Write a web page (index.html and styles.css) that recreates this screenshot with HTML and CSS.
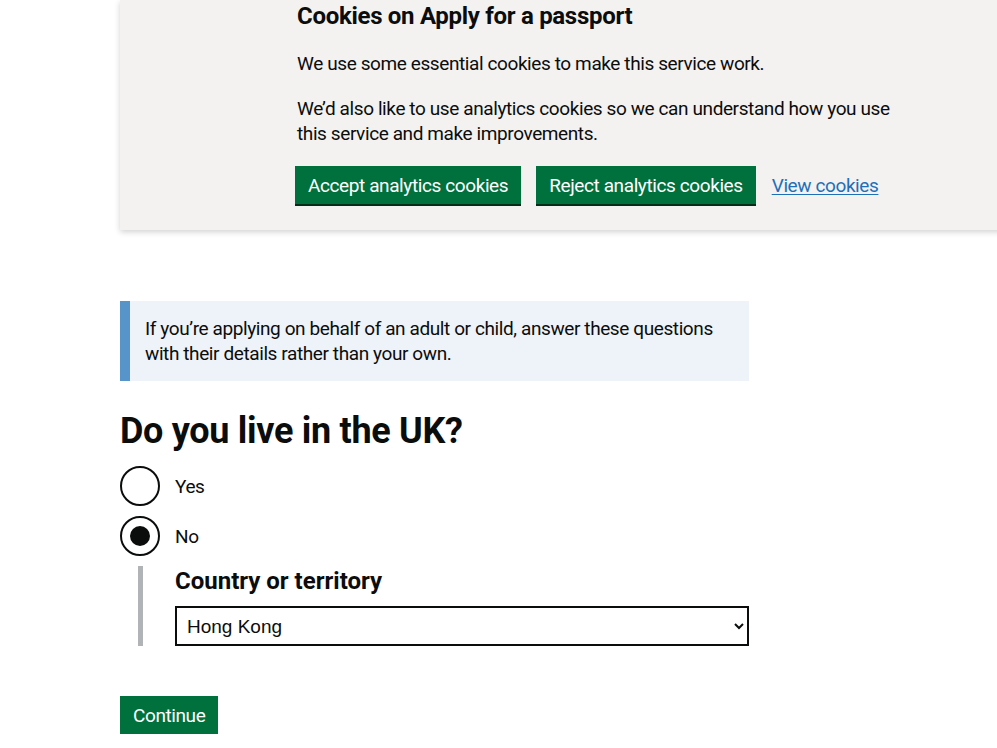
FILE: index.html
```html
<!DOCTYPE html>
<html lang="en">
<head>
<meta charset="utf-8">
<title>Apply for a passport</title>
<link rel="stylesheet" href="styles.css">
</head>
<body>
<div class="page">
  <div class="cookie-banner">
    <div class="cookie-content">
      <h2 class="cookie-title">Cookies on Apply for a passport</h2>
      <p class="body">We use some essential cookies to make this service work.</p>
      <p class="body">We’d also like to use analytics cookies so we can understand how you use this service and make improvements.</p>
      <div class="button-group">
        <button class="btn">Accept analytics cookies</button>
        <button class="btn">Reject analytics cookies</button>
        <a class="link" href="#">View cookies</a>
      </div>
    </div>
  </div>

  <main class="main">
    <div class="inset">If you’re applying on behalf of an adult or child, answer these questions with their details rather than your own.</div>
    <h1 class="question">Do you live in the UK?</h1>
    <div class="radios">
      <div class="radio">
        <span class="radio-circle"></span>
        <span class="radio-label">Yes</span>
      </div>
      <div class="radio">
        <span class="radio-circle checked"></span>
        <span class="radio-label">No</span>
      </div>
      <div class="conditional">
        <label class="field-label">Country or territory</label>
        <select class="select">
          <option>Hong Kong</option>
        </select>
      </div>
    </div>
    <button class="btn continue">Continue</button>
  </main>
</div>
</body>
</html>
```

FILE: styles.css
```css
html, body {
  margin: 0;
  padding: 0;
  background: #ffffff;
  overflow: hidden;
}
body {
  font-family: Roboto, "Liberation Sans", Arial, sans-serif;
  color: #0b0c0c;
}
.page {
  padding-left: 120px;
}
.cookie-banner {
  width: 1000px;
  background: #f3f2f1;
  box-shadow: 0 2px 6px rgba(0, 0, 0, 0.18);
  height: 230px;
  box-sizing: border-box;
}
.cookie-content {
  padding-left: 177px;
  padding-top: 1px;
  width: 610px;
}
.cookie-title {
  margin: 0 0 20px;
  font-size: 24px;
  line-height: 30px;
  font-weight: 700;
  letter-spacing: -0.3px;
}
.body {
  margin: 0 0 20px;
  font-size: 19px;
  line-height: 25px;
  letter-spacing: -0.4px;
}
.button-group {
  display: flex;
  align-items: center;
  gap: 15px;
  margin-left: -2px;
  width: 700px;
}
.btn {
  font-family: inherit;
  font-size: 19px;
  line-height: 23px;
  letter-spacing: -0.4px;
  white-space: nowrap;
  color: #ffffff;
  background: #00703c;
  border: 0;
  border-radius: 0;
  padding: 8px 13px 7px;
  box-shadow: 0 2px 0 #002d18;
  cursor: pointer;
}
.link {
  font-size: 19px;
  line-height: 25px;
  letter-spacing: -0.4px;
  white-space: nowrap;
  color: #1d70b8;
  text-decoration: underline;
  text-underline-offset: 2px;
  margin-left: 1px;
}
.main {
  padding-top: 71px;
  width: 629px;
}
.inset {
  background: #eef3f9;
  border-left: 10px solid #5694ca;
  padding: 15px;
  font-size: 19px;
  line-height: 25px;
  letter-spacing: -0.4px;
}
.question {
  margin: 30px 0 15px;
  font-size: 36px;
  line-height: 40px;
  font-weight: 700;
  letter-spacing: -0.3px;
}
.radios {
  display: flex;
  flex-direction: column;
  gap: 10px;
}
.radio {
  display: flex;
  align-items: center;
  gap: 15px;
  height: 40px;
}
.radio-circle {
  width: 40px;
  height: 40px;
  box-sizing: border-box;
  border: 2px solid #0b0c0c;
  border-radius: 50%;
  display: flex;
  align-items: center;
  justify-content: center;
  background: #fff;
}
.radio-circle.checked::after {
  content: "";
  width: 20px;
  height: 20px;
  border-radius: 50%;
  background: #0b0c0c;
}
.radio-label {
  font-size: 19px;
  line-height: 25px;
  letter-spacing: -0.4px;
}
.conditional {
  margin-left: 18px;
  border-left: 5px solid #b1b4b6;
  padding-left: 32px;
  display: flex;
  flex-direction: column;
  gap: 10px;
}
.field-label {
  font-size: 24px;
  line-height: 30px;
  font-weight: 700;
}
.select {
  width: 574px;
  height: 40px;
  box-sizing: border-box;
  border: 2px solid #0b0c0c;
  border-radius: 0;
  background: #ffffff;
  font-family: "Liberation Sans", Arial, sans-serif;
  font-size: 19px;
  color: #0b0c0c;
  padding: 5px 6px;
}
.continue {
  margin-top: 50px;
}
```
